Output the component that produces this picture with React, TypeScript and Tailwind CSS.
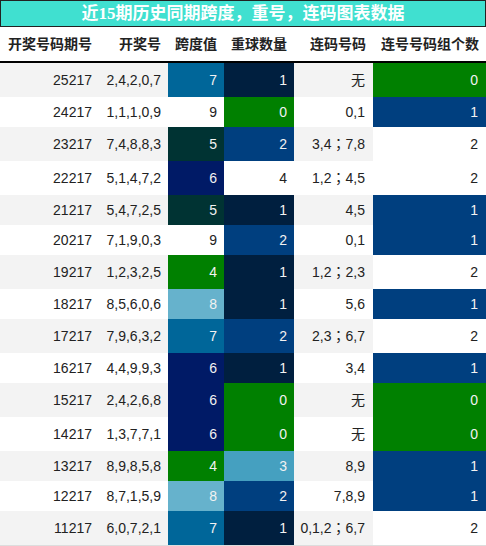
const rows = [
  { qh: "25217", kj: "2,4,2,0,7", kd: 7, cq: 1, lm: "无", gs: 0 },
  { qh: "24217", kj: "1,1,1,0,9", kd: 9, cq: 0, lm: "0,1", gs: 1 },
  { qh: "23217", kj: "7,4,8,8,3", kd: 5, cq: 2, lm: "3,4；7,8", gs: 2 },
  { qh: "22217", kj: "5,1,4,7,2", kd: 6, cq: 4, lm: "1,2；4,5", gs: 2 },
  { qh: "21217", kj: "5,4,7,2,5", kd: 5, cq: 1, lm: "4,5", gs: 1 },
  { qh: "20217", kj: "7,1,9,0,3", kd: 9, cq: 2, lm: "0,1", gs: 1 },
  { qh: "19217", kj: "1,2,3,2,5", kd: 4, cq: 1, lm: "1,2；2,3", gs: 2 },
  { qh: "18217", kj: "8,5,6,0,6", kd: 8, cq: 1, lm: "5,6", gs: 1 },
  { qh: "17217", kj: "7,9,6,3,2", kd: 7, cq: 2, lm: "2,3；6,7", gs: 2 },
  { qh: "16217", kj: "4,4,9,9,3", kd: 6, cq: 1, lm: "3,4", gs: 1 },
  { qh: "15217", kj: "2,4,2,6,8", kd: 6, cq: 0, lm: "无", gs: 0 },
  { qh: "14217", kj: "1,3,7,7,1", kd: 6, cq: 0, lm: "无", gs: 0 },
  { qh: "13217", kj: "8,9,8,5,8", kd: 4, cq: 3, lm: "8,9", gs: 1 },
  { qh: "12217", kj: "8,7,1,5,9", kd: 8, cq: 2, lm: "7,8,9", gs: 1 },
  { qh: "11217", kj: "6,0,7,2,1", kd: 7, cq: 1, lm: "0,1,2；6,7", gs: 2 },
];

// colour scales per column
const kdColor: Record<number, string> = {
  4: "bg-[#008000] text-[#f2f2f2]",
  5: "bg-[#003333] text-[#f2f2f2]",
  6: "bg-[#001a66] text-[#f2f2f2]",
  7: "bg-[#006699] text-[#f2f2f2]",
  8: "bg-[#66b2cc] text-[#f2f2f2]",
};
const cqColor: Record<number, string> = {
  0: "bg-[#008000] text-[#f2f2f2]",
  1: "bg-[#001f3f] text-[#f2f2f2]",
  2: "bg-[#003f7f] text-[#f2f2f2]",
  3: "bg-[#45a0c0] text-[#f2f2f2]",
  4: "bg-white",
};
const gsColor: Record<number, string> = {
  0: "bg-[#008000] text-[#f2f2f2]",
  1: "bg-[#003f7f] text-[#f2f2f2]",
  2: "bg-white",
};

const cell = "flex items-center justify-end pr-[7px]";

export default function App() {
  return (
    <div className="w-[486px] h-[546px] bg-white font-['Liberation_Sans','Noto_Sans_CJK_SC',sans-serif] text-[14px] text-[#222] overflow-hidden">
      {/* title */}
      <div className="h-[27px] border border-[#222] bg-[#40e0d0] flex items-center justify-center">
        <span className="text-white font-bold text-[17px] leading-none font-['Liberation_Serif','Noto_Sans_CJK_SC',serif]">
          近15期历史同期跨度，重号，连码图表数据
        </span>
      </div>

      {/* header */}
      <div className="grid grid-cols-[99px_69px_56px_70px_79px_113px] h-[36px] border-b-2 border-black font-bold">
        <div className={cell}>开奖号码期号</div>
        <div className={cell}>开奖号</div>
        <div className={cell}>跨度值</div>
        <div className={cell}>重球数量</div>
        <div className={cell}>连码号码</div>
        <div className={cell}>连号号码组个数</div>
      </div>

      {/* rows */}
      <div className="border-b border-[#ddd]">
        {rows.map((r, i) => {
          const tall = r.lm.includes("；") || r.lm === "无";
          return (
            <div
              key={r.qh}
              className={`grid grid-cols-[99px_69px_56px_70px_79px_113px] ${tall ? "h-[34px]" : "h-[30px]"} ${
                i % 2 === 0 ? "bg-[#f3f3f3]" : "bg-white"
              }`}
            >
              <div className={cell}>{r.qh}</div>
              <div className={cell}>{r.kj}</div>
              <div className={`${cell} ${kdColor[r.kd] ?? ""}`}>{r.kd}</div>
              <div className={`${cell} ${cqColor[r.cq] ?? ""}`}>{r.cq}</div>
              <div className={`${cell} pr-[8px] font-['Liberation_Sans','Noto_Sans_CJK_TC',sans-serif]`}>{r.lm}</div>
              <div className={`${cell} pr-[8px] ${gsColor[r.gs] ?? ""}`}>{r.gs}</div>
            </div>
          );
        })}
      </div>
    </div>
  );
}
